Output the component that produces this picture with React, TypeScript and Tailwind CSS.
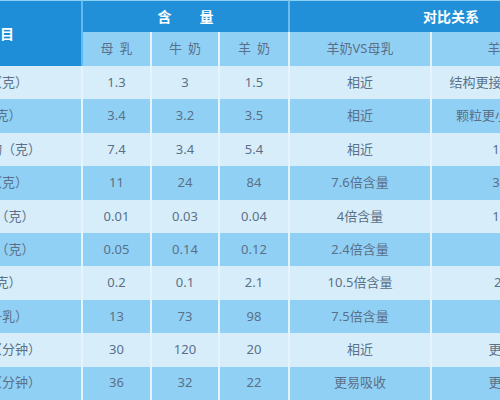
import type { FC } from 'react'

interface Row {
  label: string
  human: string
  cow: string
  goat: string
  vsHuman: string
  vsCow: string
}

const rows: Row[] = [
  { label: '蛋白质（克）', human: '1.3', cow: '3', goat: '1.5', vsHuman: '相近', vsCow: '结构更接近母乳更易消化' },
  { label: '脂肪（克）', human: '3.4', cow: '3.2', goat: '3.5', vsHuman: '相近', vsCow: '颗粒更小更易消化吸收' },
  { label: '碳水化合物（克）', human: '7.4', cow: '3.4', goat: '5.4', vsHuman: '相近', vsCow: '1.6倍含量' },
  { label: '矿物质（克）', human: '11', cow: '24', goat: '84', vsHuman: '7.6倍含量', vsCow: '3.5倍含量' },
  { label: '乳铁蛋白（克）', human: '0.01', cow: '0.03', goat: '0.04', vsHuman: '4倍含量', vsCow: '1.3倍含量' },
  { label: '乳清蛋白（克）', human: '0.05', cow: '0.14', goat: '0.12', vsHuman: '2.4倍含量', vsCow: '相近' },
  { label: '乳糖（克）', human: '0.2', cow: '0.1', goat: '2.1', vsHuman: '10.5倍含量', vsCow: '21倍含量' },
  { label: '钙（每升乳）', human: '13', cow: '73', goat: '98', vsHuman: '7.5倍含量', vsCow: '相近' },
  { label: '消化时间（分钟）', human: '30', cow: '120', goat: '20', vsHuman: '相近', vsCow: '更容易消化' },
  { label: '吸收时间（分钟）', human: '36', cow: '32', goat: '22', vsHuman: '更易吸收', vsCow: '更容易吸收' },
]

const cell = 'flex items-center justify-center whitespace-nowrap overflow-hidden border-r-2 border-[#e4f3fc]'

const DataRow: FC<{ row: Row; index: number }> = ({ row, index }) => {
  const bg = index % 2 === 0 ? 'bg-[#d7eefa]' : 'bg-[#91d0f5]'
  const values = [row.label, row.human, row.cow, row.goat, row.vsHuman, row.vsCow]
  return (
    <>
      {values.map((value, i) => (
        <div key={i} className={`${cell} ${bg}`}>
          {value}
        </div>
      ))}
    </>
  )
}

export default function App() {
  return (
    <div className="w-[500px] h-[400px] overflow-hidden bg-[#d7eefa]">
      <div
        className="-ml-[103px] w-[715px] grid grid-cols-[186px_69px_68px_70px_142px_180px] grid-rows-[32px_34px_repeat(10,33.4px)] text-[13px] text-[#5a7088]"
        style={{ fontFamily: '"Noto Sans", "Noto Sans CJK SC", sans-serif' }}
      >
        <div className="row-span-2 flex items-center justify-center gap-[22px] bg-[#1f8ed8] border-t border-[#8fd0f5] border-r-2 border-r-[#63b8ec] text-[14px] font-bold text-white">
          <span>项</span>
          <span>目</span>
        </div>
        <div className="col-span-3 flex items-center justify-center gap-[28px] bg-[#2190d9] border-t border-[#8fd0f5] border-r-2 border-r-[#6cbdee] text-[14px] font-bold text-white">
          <span>含</span>
          <span>量</span>
        </div>
        <div className="col-span-2 flex items-center justify-center bg-[#2190d9] border-t border-[#8fd0f5] text-[14px] font-bold text-white">
          对比关系
        </div>
        {['母乳', '牛奶', '羊奶'].map((name) => (
          <div key={name} className={`${cell} bg-[#91d0f5] gap-[6px]`}>
            <span>{name.slice(0, 1)}</span>
            <span>{name.slice(1)}</span>
          </div>
        ))}
        <div className={`${cell} bg-[#91d0f5]`}>羊奶VS母乳</div>
        <div className={`${cell} bg-[#91d0f5]`}>羊奶VS牛奶</div>
        {rows.map((row, i) => (
          <DataRow key={row.label} row={row} index={i} />
        ))}
      </div>
    </div>
  )
}
